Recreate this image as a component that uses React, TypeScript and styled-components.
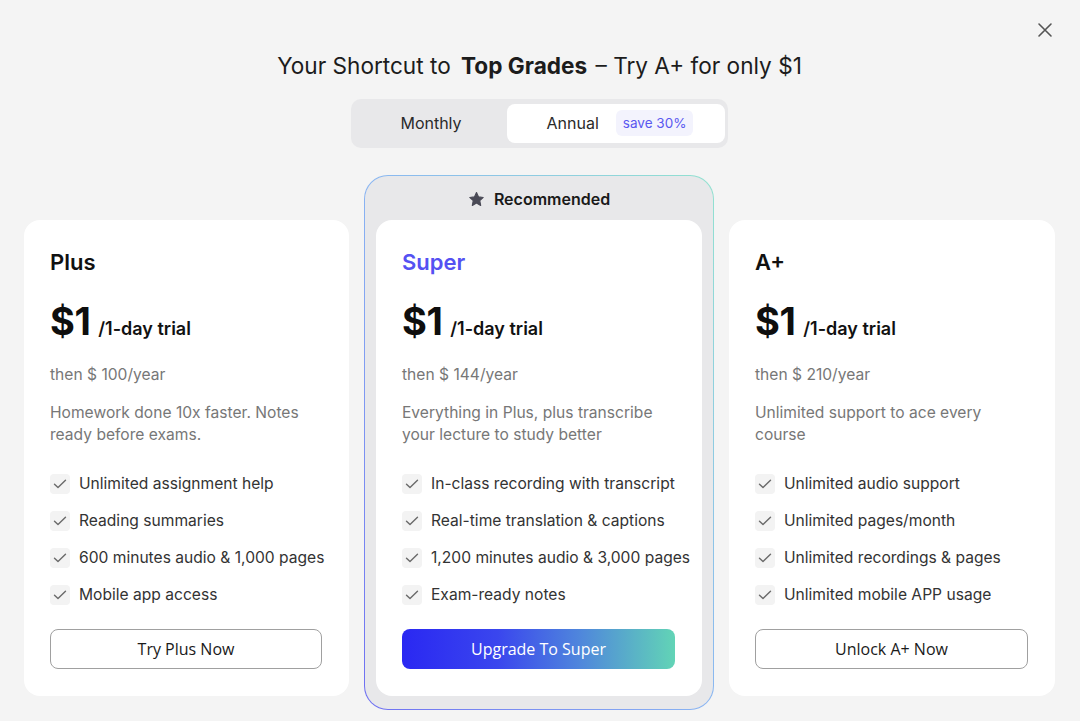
import styled, { createGlobalStyle } from "styled-components";

const GlobalStyle = createGlobalStyle`
    * { box-sizing: border-box; }
    body {
        margin: 0;
        background: #f4f4f4;
        font-family: Inter, "Noto Sans", sans-serif;
        color: #1a1a1a;
    }
`

const Page = styled.div`
    position: relative;
    width: 1080px;
    height: 721px;
    padding: 51px 25px 0 24px;
    display: flex;
    flex-direction: column;
    align-items: center;
    overflow: hidden;
`

const CloseButton = styled.button`
    position: absolute;
    top: 21px;
    right: 26px;
    width: 18px;
    height: 18px;
    padding: 0;
    border: none;
    background: none;
    display: flex;
    align-items: center;
    justify-content: center;
    cursor: pointer;
`

const Title = styled.h1`
    margin: 0;
    font-size: 22.6px;
    line-height: 30px;
    font-weight: 400;
    color: #1c1c1c;

    strong {
        font-weight: 700;
        margin-left: 4px;
        margin-right: 2px;
    }
`

const Toggle = styled.div`
    margin-top: 18px;
    width: 377px;
    height: 49px;
    padding: 5px 3px 5px 4px;
    border-radius: 10px;
    background: #e8e8ea;
    display: flex;
`

const Tab = styled.div<{ $active?: boolean; $width: number }>`
    width: ${({ $width }) => $width}px;
    height: 100%;
    border-radius: 8px;
    background: ${({ $active }) => ($active ? "#ffffff" : "transparent")};
    display: flex;
    align-items: center;
    justify-content: center;
    gap: 17px;
    font-size: 16px;
    color: #2a2a2a;
    padding-left: ${({ $active }) => ($active ? "8px" : "0")};
    padding-bottom: 2px;
`

const SaveBadge = styled.span`
    display: inline-flex;
    align-items: center;
    height: 26px;
    padding: 0 7px;
    border-radius: 6px;
    background: #f3f3fd;
    color: #5a58f0;
    font-size: 13.5px;
`

const Plans = styled.div`
    margin-top: 27px;
    width: 100%;
    display: flex;
    align-items: flex-start;
    gap: 15px;
`

const Recommended = styled.div`
    width: 350px;
    flex-shrink: 0;
    padding: 0 11px 13px 11px;
    border-radius: 24px;
    border: 1px solid transparent;
    background:
        linear-gradient(#e8e8ea, #e8e8ea) padding-box,
        linear-gradient(to top right, #6e6ef2, #8ab6f2 50%, #92e2d0) border-box;
    display: flex;
    flex-direction: column;
`

const RecommendedLabel = styled.div`
    height: 44px;
    display: flex;
    align-items: center;
    justify-content: center;
    gap: 9px;
    font-size: 16px;
    font-weight: 600;
    color: #1a1a1a;
    padding-top: 2px;
`

const Card = styled.div<{ $offset?: boolean }>`
    width: ${({ $offset }) => ($offset ? "325px" : "326px")};
    height: 476px;
    flex-shrink: 0;
    margin-top: ${({ $offset }) => ($offset ? "45px" : "0")};
    background: #ffffff;
    border-radius: 16px;
    padding: 28px 27px 27px 26px;
    display: flex;
    flex-direction: column;
`

const CardSide = styled(Card)`
    margin-top: 45px;
`

const PlanName = styled.div<{ $accent?: boolean }>`
    font-size: 22px;
    line-height: 28px;
    font-weight: 600;
    color: ${({ $accent }) => ($accent ? "#5551f2" : "#111111")};
`

const PriceRow = styled.div`
    margin-top: 22px;
    display: flex;
    align-items: baseline;
    gap: 8px;
    line-height: 46px;
`

const Price = styled.span`
    font-size: 38px;
    font-weight: 700;
    color: #0e0e0e;
    letter-spacing: -0.5px;
`

const Trial = styled.span`
    font-size: 18px;
    font-weight: 600;
    color: #111111;
`

const Renewal = styled.div`
    margin-top: 12px;
    font-size: 15.6px;
    line-height: 22px;
    color: #777777;
`

const Description = styled.p`
    margin: 16px 0 0;
    font-size: 15.6px;
    line-height: 22px;
    color: #777777;
    min-height: 44px;
`

const Features = styled.ul`
    list-style: none;
    margin: 27px 0 0;
    padding: 0;
    display: flex;
    flex-direction: column;
    gap: 15px;
`

const Feature = styled.li`
    display: flex;
    align-items: center;
    gap: 9px;
    font-size: 15.6px;
    line-height: 22px;
    color: #333333;
    white-space: nowrap;
`

const CheckBox = styled.span`
    width: 20px;
    height: 20px;
    border-radius: 4px;
    background: #f3f3f3;
    display: flex;
    align-items: center;
    justify-content: center;
    flex-shrink: 0;
`

const ActionButton = styled.button<{ $primary?: boolean }>`
    margin-top: auto;
    height: 40px;
    width: 100%;
    border-radius: 8px;
    font-family: "Open Sans", sans-serif;
    font-size: 16px;
    cursor: pointer;
    color: ${({ $primary }) => ($primary ? "#ffffff" : "#1a1a1a")};
    border: ${({ $primary }) => ($primary ? "none" : "1px solid #a0a0a0")};
    background: ${({ $primary }) =>
        $primary
            ? "linear-gradient(90deg, #2a28f2 0%, #3a46ee 35%, #4f86dc 65%, #62d4b6 100%)"
            : "#ffffff"};
`

const Check = () => (
    <CheckBox>
        <svg width="14" height="14" viewBox="0 0 14 14" fill="none">
            <path d="M1.5 7.2 L5 10.6 L12.5 3.2" stroke="#6a6a6a" strokeWidth="1.4" strokeLinecap="round" strokeLinejoin="round" />
        </svg>
    </CheckBox>
)

interface Plan {
    readonly name: string
    readonly renewal: string
    readonly description: string
    readonly features: ReadonlyArray<string>
    readonly action: string
}

const plans: Record<string, Plan> = {
    plus: {
        name: "Plus",
        renewal: "then $ 100/year",
        description: "Homework done 10x faster. Notes ready before exams.",
        features: ["Unlimited assignment help", "Reading summaries", "600 minutes audio & 1,000 pages", "Mobile app access"],
        action: "Try Plus Now",
    },
    super: {
        name: "Super",
        renewal: "then $ 144/year",
        description: "Everything in Plus, plus transcribe your lecture to study better",
        features: ["In-class recording with transcript", "Real-time translation & captions", "1,200 minutes audio & 3,000 pages", "Exam-ready notes"],
        action: "Upgrade To Super",
    },
    aplus: {
        name: "A+",
        renewal: "then $ 210/year",
        description: "Unlimited support to ace every course",
        features: ["Unlimited audio support", "Unlimited pages/month", "Unlimited recordings & pages", "Unlimited mobile APP usage"],
        action: "Unlock A+ Now",
    },
}

const PlanBody = ({ plan, accent = false }: { plan: Plan; accent?: boolean }) => (
    <>
        <PlanName $accent={accent}>{plan.name}</PlanName>
        <PriceRow>
            <Price>$1</Price>
            <Trial>/1-day trial</Trial>
        </PriceRow>
        <Renewal>{plan.renewal}</Renewal>
        <Description>{plan.description}</Description>
        <Features>
            {plan.features.map((f) => (
                <Feature key={f}>
                    <Check />
                    {f}
                </Feature>
            ))}
        </Features>
        <ActionButton $primary={accent}>{plan.action}</ActionButton>
    </>
)

const App = () => (
    <>
        <GlobalStyle />
        <Page>
            <CloseButton aria-label="Close">
                <svg width="16" height="16" viewBox="0 0 16 16" fill="none">
                    <path d="M2 2 L14 14 M14 2 L2 14" stroke="#555555" strokeWidth="1.6" strokeLinecap="round" />
                </svg>
            </CloseButton>
            <Title>
                Your Shortcut to <strong>Top Grades</strong> – Try A+ for only $1
            </Title>
            <Toggle>
                <Tab $width={152}>Monthly</Tab>
                <Tab $width={218} $active>
                    Annual
                    <SaveBadge>save 30%</SaveBadge>
                </Tab>
            </Toggle>
            <Plans>
                <CardSide $offset>
                    <PlanBody plan={plans.plus} />
                </CardSide>
                <Recommended>
                    <RecommendedLabel>
                        <svg width="17" height="17" viewBox="0 0 24 24">
                            <path
                                d="M12 2.2l2.9 6.1 6.6.8-4.9 4.6 1.3 6.6L12 17.1l-5.9 3.2 1.3-6.6-4.9-4.6 6.6-.8z"
                                fill="#4a4a56"
                                stroke="#4a4a56"
                                strokeWidth="1.6"
                                strokeLinejoin="round"
                            />
                        </svg>
                        Recommended
                    </RecommendedLabel>
                    <Card>
                        <PlanBody plan={plans.super} accent />
                    </Card>
                </Recommended>
                <CardSide>
                    <PlanBody plan={plans.aplus} />
                </CardSide>
            </Plans>
        </Page>
    </>
)

export default App
